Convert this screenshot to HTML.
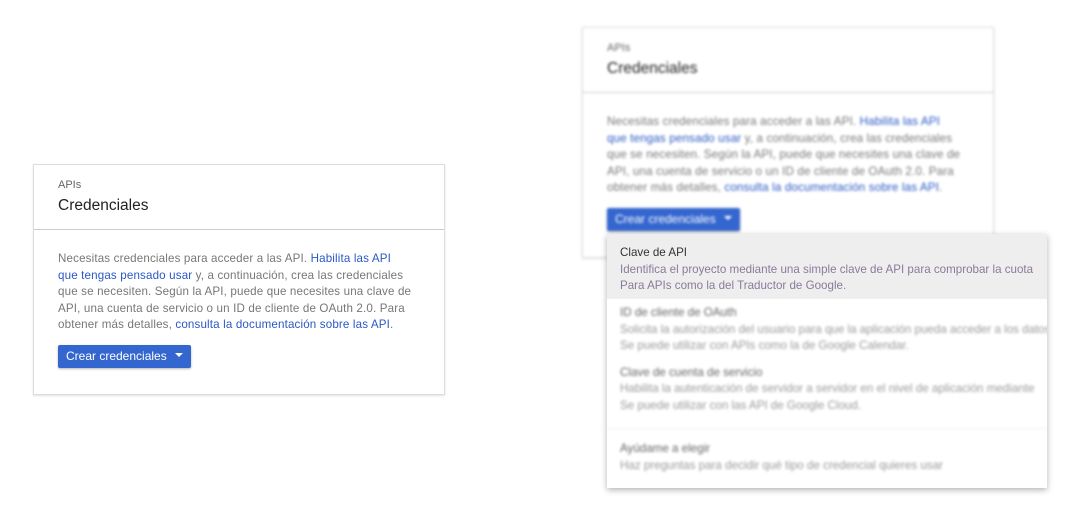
<!DOCTYPE html>
<html><head><meta charset="utf-8"><style>
body{margin:0;width:1068px;height:505px;background:#fff;font-family:"Liberation Sans",Arial,sans-serif;position:relative;overflow:hidden}
.card{position:absolute;background:#fff;border:1px solid #ddd;box-shadow:0 1px 2px rgba(0,0,0,.12);box-sizing:border-box}
.hd{height:65px;border-bottom:1px solid #ccc;padding:14px 24px 0;box-sizing:border-box}
.sm{font-size:11px;color:#666}
.tt{font-size:15.5px;color:#222;margin-top:6px}
.bd{padding:21px 24px 0;font-size:11.6px;line-height:16.5px;color:#777;white-space:nowrap;letter-spacing:0.15px}
a{color:#2a58c4;text-decoration:none}
.btn{display:inline-block;background:#3466cf;color:#fff;font-size:12px;height:23px;line-height:23px;padding:0 8px;border-radius:2px;margin-top:11px;box-shadow:0 1px 2px rgba(0,0,0,.3);letter-spacing:0}
.btn span{display:inline-block;margin-left:8px;border:4px solid transparent;border-top:4px solid #fff;vertical-align:-1px}
.blur{filter:blur(1.3px)}
.menu{position:absolute;left:607px;top:234px;width:440px;height:254px;background:#fff;box-shadow:0 2px 6px rgba(0,0,0,.3);font-size:11.6px;line-height:16.5px;overflow:hidden}
.it{padding:8px 13px;white-space:nowrap}
.it b{font-weight:normal;color:#333;display:block}
.it{color:#8a7a9a}
</style></head><body>
<div class="card" style="left:33px;top:164px;width:412px;height:231px">
<div class="hd"><div class="sm">APIs</div><div class="tt">Credenciales</div></div>
<div class="bd">Necesitas credenciales para acceder a las API. <a>Habilita las API</a><br><a>que tengas pensado usar</a> y, a continuación, crea las credenciales<br>que se necesiten. Según la API, puede que necesites una clave de<br>API, una cuenta de servicio o un ID de cliente de OAuth 2.0. Para<br>obtener más detalles, <a>consulta la documentación sobre las API</a>.<br><div class="btn">Crear credenciales<span></span></div></div>
</div>
<div class="card blur" style="left:582px;top:27px;width:412px;height:231px">
<div class="hd" style="height:65px"><div class="sm">APIs</div><div class="tt">Credenciales</div></div>
<div class="bd">Necesitas credenciales para acceder a las API. <a>Habilita las API</a><br><a>que tengas pensado usar</a> y, a continuación, crea las credenciales<br>que se necesiten. Según la API, puede que necesites una clave de<br>API, una cuenta de servicio o un ID de cliente de OAuth 2.0. Para<br>obtener más detalles, <a>consulta la documentación sobre las API</a>.<br><div class="btn">Crear credenciales<span></span></div></div>
</div>
<div class="menu">
<div class="it" style="background:#eee;padding-top:11px;height:46px"><b>Clave de API</b>Identifica el proyecto mediante una simple clave de API para comprobar la cuota<br>Para APIs como la del Traductor de Google.</div>
<div class="blur" style="color:#999">
<div class="it" style="color:#999;padding-top:6px"><b style="color:#666">ID de cliente de OAuth</b>Solicita la autorización del usuario para que la aplicación pueda acceder a los datos<br>Se puede utilizar con APIs como la de Google Calendar.</div>
<div class="it" style="color:#999;padding-top:2px"><b style="color:#666">Clave de cuenta de servicio</b>Habilita la autenticación de servidor a servidor en el nivel de aplicación mediante<br>Se puede utilizar con las API de Google Cloud.</div>
<div style="border-top:1px solid #eee;margin-top:6px"></div>
<div class="it" style="color:#999;padding-top:12px"><b style="color:#666">Ayúdame a elegir</b>Haz preguntas para decidir qué tipo de credencial quieres usar</div>
</div></div>
</body></html>
